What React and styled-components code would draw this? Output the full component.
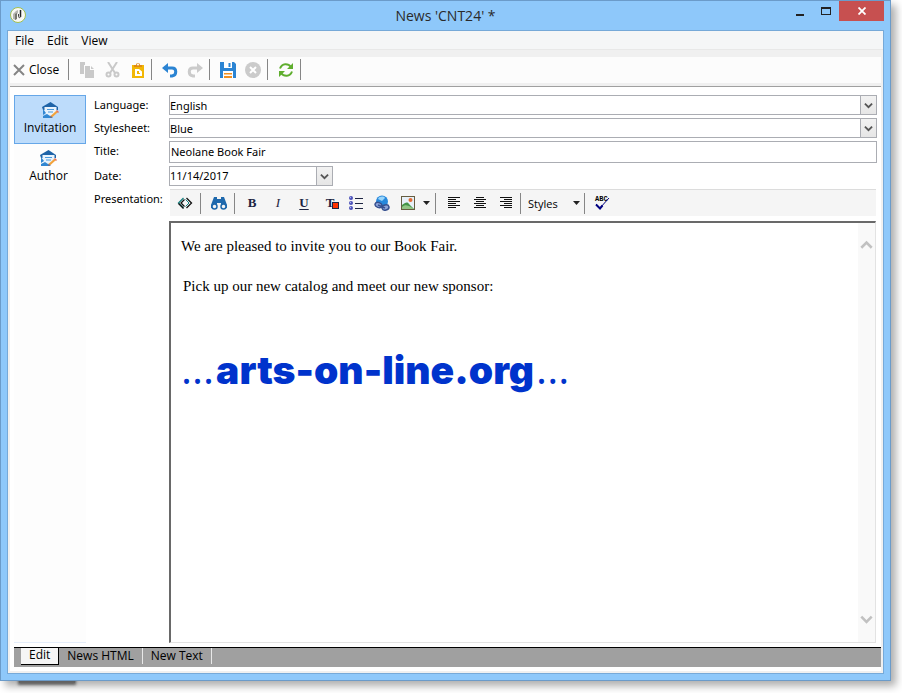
import React, { useState } from 'react';
import styled, { createGlobalStyle, css } from 'styled-components';

const GlobalStyle = createGlobalStyle`
  *, *::before, *::after { box-sizing: border-box; }
  body { margin: 0; background: #fff; overflow: hidden; }
  body, button, input, select {
    font-family: "Open Sans", "Noto Sans", sans-serif;
    font-size: 12px;
    color: #000;
  }
  button { padding: 0; border: 0; background: none; white-space: nowrap; }
  svg { display: block; flex: none; }
`;

const Desktop = styled.div`
  display: flex;
  min-height: 100vh;
  padding: 0 11px 12px 0;
`;

const Window = styled.div`
  position: relative;
  flex: 1;
  min-width: 0;
  display: flex;
  flex-direction: column;
  padding: 0 6px 6px;
  border: 1px solid #6b9bc9;
  background: #8ec8fa;
  box-shadow: 5px 5px 8px rgba(0, 0, 0, 0.32);

  &::after {
    content: '';
    position: absolute;
    z-index: -1;
    left: 18px;
    bottom: -3px;
    width: 56px;
    height: 6px;
    background: #888;
    box-shadow: 0 1px 3px 1px rgba(0, 0, 0, 0.5);
  }
`;

const TitleBar = styled.header`
  display: grid;
  grid-template-columns: 98px 1fr 98px;
  height: 29px;
`;

const AppMark = styled.div`
  padding: 5px 0 0 2px;
`;

const WindowTitle = styled.h1`
  margin: 0;
  font-size: 14px;
  font-weight: 400;
  line-height: 29px;
  color: #2a2a2a;
  text-align: center;
`;

const WindowButtons = styled.div`
  display: flex;
  justify-content: flex-end;
`;

const WindowButton = styled.button`
  flex: none;
  display: grid;
  place-items: center;
  width: ${(p) => (p.$close ? '45px' : '26px')};
  height: 20px;
  background: ${(p) => (p.$close ? '#c75050' : 'transparent')};
`;

const Client = styled.div`
  flex: 1;
  display: flex;
  flex-direction: column;
  padding-bottom: 2px;
  border: 1px solid #76a9d8;
  background: #f0f0f0;
`;

const MenuBar = styled.nav`
  display: flex;
  gap: 13px;
  height: 19px;
  padding-left: 7px;
  border-bottom: 1px solid #e8e8e8;
  background: #f5f6f7;
`;

const MenuItem = styled.button`
  line-height: 20px;
`;

const Toolbar = styled.div`
  display: flex;
  align-items: center;
  height: 26px;
  margin: 7px 2px 3px;
  padding: 0 0 1px 3px;
  background: #fcfcfc;
`;

const ToolButton = styled.button`
  display: flex;
  align-items: center;
  justify-content: center;
  gap: 4px;
  width: ${(p) => p.$width || 25}px;
  height: 22px;
`;

const Divider = styled.span`
  flex: none;
  width: 1px;
  height: 21px;
  margin: 0 ${(p) => p.$after || 4}px 0 ${(p) => p.$before || 4}px;
  background: #868686;
`;

const Body = styled.div`
  flex: 1;
  display: flex;
  flex-direction: column;
  margin: 0 2px;
  border-top: 1px solid #a0a0a0;
  background: #fff;
`;

const Workspace = styled.main`
  flex: 1;
  display: flex;
  gap: 8px;
  padding: 8px 4px 4px;
`;

const Sidebar = styled.nav`
  display: flex;
  flex-direction: column;
  width: 72px;
  border-bottom: 1px solid #e4edfa;
  background: #fdfdfd;
`;

const SideItem = styled.button`
  display: flex;
  flex-direction: column;
  align-items: center;
  height: ${(p) => (p.$active ? 49 : 48)}px;
  padding: ${(p) => (p.$active ? '6px 3px 0' : '5px 5px 0 2px')};
  border: 1px solid ${(p) => (p.$active ? '#66a7e8' : 'transparent')};
  background: ${(p) => (p.$active ? '#bddcfb' : 'transparent')};
  line-height: 18px;
`;

const Form = styled.form`
  flex: 1;
  min-width: 0;
  display: grid;
  grid-template-columns: 75px 1fr;
  grid-template-rows: 20px 20px 22px 20px 1fr;
  row-gap: 3px;
`;

const formText = css`
  font-family: "Noto Sans", "Open Sans", sans-serif;
  font-size: 11px;
`;

const Label = styled.label`
  ${formText}
  line-height: 19px;
`;

const fieldText = css`
  ${formText}
  width: 100%;
  min-width: 0;
  padding: 0;
  border: 0;
  outline: 0;
  background: transparent;
  appearance: none;
`;

const Field = styled.div`
  position: relative;
  display: flex;
  width: ${(p) => p.$width || '100%'};
  border: 1px solid #abadb3;
  background: #fff;
`;

const Select = styled.select`
  ${fieldText}
`;

const Input = styled.input`
  ${fieldText}
  padding-bottom: 2px;
  padding-left: ${(p) => p.$indent || 0}px;
`;

const dropArrow = css`
  flex: none;
  display: grid;
  place-items: center;
  width: 16px;
  border-left: 1px solid #abadb3;
  background: linear-gradient(#f2f2f2, #e6e6e6);
`;

const SelectArrow = styled.span`
  ${dropArrow}
  position: absolute;
  inset: 0 0 0 auto;
  pointer-events: none;
`;

const DateButton = styled.button`
  ${dropArrow}
  border-left: 1px solid #abadb3;
`;

const RichText = styled.div`
  display: flex;
  flex-direction: column;
  gap: 5px;
  margin-right: 1px;
`;

const FormatBar = styled.div`
  display: flex;
  align-items: center;
  height: 27px;
  margin-left: 1px;
  padding-left: 2px;
  border-top: 1px solid #dcdcdc;
  background: #f5f5f5;
`;

const FormatButton = styled(ToolButton)`
  width: ${(p) => p.$width || 26}px;
`;

const Letter = styled.span`
  position: relative;
  font-family: "Liberation Serif", serif;
  font-size: 13px;
  line-height: 14px;
  color: #1c2442;
  font-weight: ${(p) => (p.$plain ? 400 : 700)};
  font-style: ${(p) => (p.$italic ? 'italic' : 'normal')};
  text-decoration: ${(p) => (p.$underline ? 'underline' : 'none')};
  text-underline-offset: 2px;
`;

const Swatch = styled.i`
  position: absolute;
  left: 6px;
  top: 6px;
  width: 7px;
  height: 7px;
  border: 1px solid #1c2442;
  background: #f30;
`;

const StylesButton = styled.button`
  display: flex;
  align-items: center;
  justify-content: space-between;
  width: 52px;
  font-size: 11px;
`;

const Editor = styled.section`
  flex: 1;
  display: flex;
  border: solid;
  border-color: #696969 #e3e3e3 #e3e3e3 #696969;
  border-width: 2px 1px 1px 2px;
`;

const Article = styled.article`
  flex: 1;
  padding: 13px 10px;
  outline: 0;
  font-family: "Liberation Serif", serif;
  font-size: 15px;
`;

const Paragraph = styled.p`
  margin: 0 0 20px;
  padding-left: ${(p) => (p.$indent ? 2 : 0)}px;
  line-height: 20px;
`;

const Sponsor = styled.div`
  display: flex;
  align-items: baseline;
  margin-top: 44px;
  line-height: 56px;
  color: #0033cc;
`;

const Dots = styled.span`
  font-family: "Open Sans", sans-serif;
  font-size: 42px;
`;

const Brand = styled.strong`
  margin: 0 2px;
  font-family: Inter, sans-serif;
  font-size: 39px;
  font-weight: 900;
`;

const ScrollBar = styled.div`
  display: flex;
  flex-direction: column;
  justify-content: space-between;
  align-items: center;
  width: 17px;
  padding: 15px 0 16px;
  background: #f9f9f9;
`;

const Tabs = styled.div`
  display: flex;
  height: 20px;
  margin: 0 0 4px 4px;
  padding-left: 7px;
  border-top: 1px solid #000;
  background: #a0a0a0;
`;

const Tab = styled.button`
  height: ${(p) => (p.$active ? 17 : 16)}px;
  padding: 0 8px;
  line-height: 16px;
  border-right: 1px solid #e8e8e8;
  ${(p) =>
    p.$active &&
    css`
      padding: 0 8px 2px;
      border-right-color: #000;
      border-bottom: 1px solid #000;
      background: #f5f5f5;
      line-height: 14px;
    `}
`;

const LogoIcon = () => (
  <svg width="18" height="18" viewBox="0 0 18 18">
    <circle cx="9" cy="9" r="7.5" fill="#f8f8f4" stroke="#a3c04f" strokeWidth="1" />
    <path d="M4 8 7 5l2-1v3L7 9v5l-3-1z" fill="#b5b5b0" />
    <path d="M6 8l2-1v6l-2 1z" fill="#77776f" />
    <path d="M11.500 4v7" stroke="#222" strokeWidth="1.500" />
    <path d="M9.500 8v2.500c0 1.500 2 1.500 2 0" fill="none" stroke="#444" />
  </svg>
);

const Chevron = ({ up, size = 9, color = '#555', thick = 2 }) => (
  <svg width={size} height={size} viewBox="0 0 10 10" fill="none" stroke={color} strokeWidth={thick}>
    <path d={up ? 'M1 7.5 5 3.5 9 7.5' : 'M1 2.8 5 6.8 9 2.8'} />
  </svg>
);

const CaretIcon = () => (
  <svg width="7" height="4" viewBox="0 0 7 4"><path d="M0 0h7L3.500 4z" fill="#222" /></svg>
);

const CloseIcon = () => (
  <svg width="12" height="12" viewBox="0 0 12 12" stroke="#858585" strokeWidth="2">
    <path d="M1 1l10 10M11 1 1 11" />
  </svg>
);

const CopyIcon = () => (
  <svg width="16" height="16" viewBox="0 0 16 16" fill="#c9c9c9">
    <path d="M0 0h5v3H4v9H0zM5 4h5v4h4v8H5zM11 4l3 3h-3z" />
  </svg>
);

const CutIcon = () => (
  <svg width="16" height="16" viewBox="0 0 16 16" fill="none" stroke="#c9c9c9" strokeWidth="2">
    <path d="M3 0 10 11M12 0 5 11" />
    <circle cx="3.500" cy="12.500" r="2" />
    <circle cx="11.500" cy="12.500" r="2" />
  </svg>
);

const PasteIcon = () => (
  <svg width="12" height="16" viewBox="0 0 12 16">
    <path d="M0 3h12v13H0z" fill="#f2b705" />
    <path d="M2 3h2a2 2 0 0 1 4 0h2v2H2z" fill="#e08a14" />
    <circle cx="6" cy="2.500" r="1" fill="#fff" />
    <path d="M3 7h4l3 2.500V14H3z" fill="#fff" />
    <path d="M5 9h2v2h1v1H5z" fill="#f2b705" />
  </svg>
);

const TurnIcon = ({ redo }) => (
  <svg width="16" height="16" viewBox="0 0 16 16">
    <g transform={redo ? 'matrix(-1 0 0 1 16 0)' : undefined}>
      <path d="M0 6 6 1v10z" fill={redo ? '#cbcbcb' : '#2b84d3'} />
      <path d="M5 6h5c5 0 5 7 0 8H8" fill="none" stroke={redo ? '#cbcbcb' : '#2b84d3'} strokeWidth="3" />
    </g>
  </svg>
);

const SaveIcon = () => (
  <svg width="16" height="16" viewBox="0 0 16 16">
    <path d="M0 0h14l2 2v14H0z" fill="#2b84d3" />
    <path d="M4 0h8v6H4zM3 9h10v7H3z" fill="#fff" />
    <path d="M8.500 1h2v4h-2z" fill="#2b84d3" />
    <path d="M4 11h8v1.500H4zM4 14h8v2H4z" fill="#f19021" />
  </svg>
);

const CancelIcon = () => (
  <svg width="16" height="16" viewBox="0 0 16 16">
    <circle cx="8" cy="8" r="8" fill="#cbcbcb" />
    <path d="M5 5l6 6M11 5l-6 6" stroke="#fff" strokeWidth="2" />
  </svg>
);

const RefreshIcon = () => (
  <svg width="16" height="16" viewBox="0 0 16 16" fill="none" stroke="#5fae2e" strokeWidth="2">
    <path d="M2 6.500C4 1 10 1 13 5M14 9.500C12 15 6 15 3 11" />
    <path d="M15 1v6H9zM1 15V9h6z" fill="#5fae2e" stroke="none" />
  </svg>
);

const MailIcon = () => (
  <svg width="17" height="17" viewBox="0 0 17 17">
    <path d="M0 5 8.500 0 16 5v3H1z" fill="#1f64a8" />
    <path d="M2.500 5h12v6l-6 3-6-3z" fill="#e9f3fc" />
    <path d="M5 7.500h7M6 10h5" stroke="#4b9add" />
    <path d="M1 7l3 4-3 2zM1 16v-2l4-2 6 4z" fill="#3187d2" />
    <path d="M9.500 14.500 15 9.500" stroke="#f3a23a" strokeWidth="2.200" />
    <path d="M15 8l2 2-1 1-2-2z" fill="#e5705a" />
    <path d="M8 16l.7-2.500 1.800 1.700z" fill="#866" />
  </svg>
);

const SourceIcon = () => (
  <svg width="16" height="12" viewBox="0 0 16 12" fill="none">
    <path d="M6.500 1 1.500 6l5 5" stroke="#168080" strokeWidth="1.300" />
    <path d="M7.500 2.500 4 6l3.500 3.500M1.500 6.500l5 5" stroke="#111" strokeWidth="1.300" />
    <path d="M9.500 1l5 5-5 5" stroke="#111" strokeWidth="1.300" />
    <path d="M8.500 2.500 12 6 8.500 9.500" stroke="#168080" />
  </svg>
);

const FindIcon = () => (
  <svg width="16" height="14" viewBox="0 0 16 14">
    <path d="M3 1h3v2h4V1h3l3 8v3h-6V7H6v5H0V9z" fill="#1f69ad" />
    <circle cx="3.500" cy="10.500" r="2.500" fill="#f5f5f5" stroke="#1f69ad" strokeWidth="1.500" />
    <circle cx="12.500" cy="10.500" r="2.500" fill="#f5f5f5" stroke="#1f69ad" strokeWidth="1.500" />
  </svg>
);

const ListIcon = () => (
  <svg width="14" height="14" viewBox="0 0 14 14">
    {[2, 7, 12].map((y) => (
      <g key={y}>
        <circle cx="2" cy={y} r="2" fill="#4a50b8" />
        <circle cx="1.500" cy={y - 0.5} r=".7" fill="#a9b0f0" />
        <path d={`M6 ${y + 0.5}h8`} stroke="#1c2442" />
      </g>
    ))}
  </svg>
);

const LinkIcon = () => (
  <svg width="16" height="16" viewBox="0 0 16 16">
    <circle cx="8" cy="6.500" r="6" fill="#2788dc" />
    <path d="M4 4c1-3 6-3 7-1L8 6z" fill="#9ad5fa" />
    <g fill="#8ea4d8" stroke="#36508f" strokeWidth="1.500">
      <ellipse cx="4.500" cy="10" rx="3.500" ry="2.500" transform="rotate(20 4.500 10)" />
      <ellipse cx="11.500" cy="12.500" rx="3.500" ry="2.500" transform="rotate(-15 11.500 12.500)" />
      <path d="M4 10l7 3" />
    </g>
  </svg>
);

const ImageIcon = () => (
  <svg width="14" height="14" viewBox="0 0 14 14">
    <rect x=".5" y=".5" width="13" height="13" fill="#e7f0f8" stroke="#665d40" />
    <path d="M1 9c3-2 5-4 7-1l5 5H1z" fill="#439447" />
    <path d="M1 11c4-4 9 0 12 2H1z" fill="#91c584" />
    <circle cx="9.500" cy="4" r="2" fill="#e36c35" />
  </svg>
);

const alignLines = {
  left: [[0, 12], [0, 8], [0, 12], [0, 8], [0, 12], [0, 8]],
  center: [[2, 10], [0, 12], [2, 10], [0, 12], [2, 10], [0, 12]],
  right: [[0, 12], [4, 12], [0, 12], [4, 12], [0, 12], [4, 12]],
};

const AlignIcon = ({ kind }) => (
  <svg width="12" height="12" viewBox="0 0 12 12" stroke="#111">
    {alignLines[kind].map(([a, b], i) => (
      <path key={i} d={`M${a} ${i * 2 + 0.5}H${b}`} />
    ))}
  </svg>
);

const SpellText = styled.text`
  font: 700 7px "Liberation Mono", monospace;
`;

const SpellIcon = () => (
  <svg width="16" height="16" viewBox="0 0 16 16">
    <SpellText x="1" y="6">ABC</SpellText>
    <path d="M2 9l4 4 9-10" fill="none" stroke="#000080" strokeWidth="1" />
    <path d="M2 9.500 6 13.500l2.500-3" fill="none" stroke="#000080" strokeWidth="2" />
  </svg>
);

export default function App() {
  const [section, setSection] = useState('Invitation');
  const [tab, setTab] = useState('Edit');
  return (
    <>
      <GlobalStyle />
      <Desktop>
        <Window>
          <TitleBar>
            <AppMark><LogoIcon /></AppMark>
            <WindowTitle>News 'CNT24' *</WindowTitle>
            <WindowButtons>
              <WindowButton aria-label="Minimize">
                <svg width="8" height="14" viewBox="0 0 8 14"><path d="M0 10h8v2H0z" fill="#222" /></svg>
              </WindowButton>
              <WindowButton aria-label="Maximize">
                <svg width="10" height="8" viewBox="0 0 10 8"><path d="M0 0h10v8H0zM1 2v5h8V2z" fill="#222" fillRule="evenodd" /></svg>
              </WindowButton>
              <WindowButton $close aria-label="Close window">
                <svg width="8" height="8" viewBox="0 0 8 8" stroke="#fff" strokeWidth="1.800"><path d="M.5.5l7 7M7.500.5l-7 7" /></svg>
              </WindowButton>
            </WindowButtons>
          </TitleBar>
          <Client>
            <MenuBar>
              <MenuItem>File</MenuItem>
              <MenuItem>Edit</MenuItem>
              <MenuItem>View</MenuItem>
            </MenuBar>
            <Toolbar>
              <ToolButton $width={46}><CloseIcon />Close</ToolButton>
              <Divider $before={9} $after={6} />
              <ToolButton aria-label="Copy"><CopyIcon /></ToolButton>
              <ToolButton aria-label="Cut"><CutIcon /></ToolButton>
              <ToolButton aria-label="Paste"><PasteIcon /></ToolButton>
              <Divider $before={1} $after={5} />
              <ToolButton aria-label="Undo"><TurnIcon /></ToolButton>
              <ToolButton aria-label="Redo" disabled><TurnIcon redo /></ToolButton>
              <Divider $before={2} $after={5} />
              <ToolButton aria-label="Save"><SaveIcon /></ToolButton>
              <ToolButton aria-label="Cancel" disabled><CancelIcon /></ToolButton>
              <Divider $before={2} $after={5} />
              <ToolButton aria-label="Refresh"><RefreshIcon /></ToolButton>
              <Divider $before={2} />
            </Toolbar>
            <Body>
              <Workspace>
                <Sidebar>
                  {['Invitation', 'Author'].map((name) => (
                    <SideItem key={name} $active={section === name} onClick={() => setSection(name)}>
                      <MailIcon />
                      {name}
                    </SideItem>
                  ))}
                </Sidebar>
                <Form onSubmit={(e) => e.preventDefault()}>
                  <Label htmlFor="language">Language:</Label>
                  <Field>
                    <Select id="language"><option>English</option></Select>
                    <SelectArrow><Chevron /></SelectArrow>
                  </Field>
                  <Label htmlFor="stylesheet">Stylesheet:</Label>
                  <Field>
                    <Select id="stylesheet"><option>Blue</option></Select>
                    <SelectArrow><Chevron /></SelectArrow>
                  </Field>
                  <Label htmlFor="title">Title:</Label>
                  <Field><Input id="title" $indent={1} defaultValue="Neolane Book Fair" /></Field>
                  <Label htmlFor="date">Date:</Label>
                  <Field $width="164px">
                    <Input id="date" defaultValue="11/14/2017" />
                    <DateButton type="button" aria-label="Choose date"><Chevron /></DateButton>
                  </Field>
                  <Label as="span" id="presentation">Presentation:</Label>
                  <RichText>
                    <FormatBar>
                      <FormatButton type="button" aria-label="Source"><SourceIcon /></FormatButton>
                      <Divider $before={2} $after={5} />
                      <FormatButton type="button" aria-label="Find"><FindIcon /></FormatButton>
                      <Divider $before={2} />
                      <FormatButton type="button"><Letter>B</Letter></FormatButton>
                      <FormatButton type="button"><Letter $plain $italic>I</Letter></FormatButton>
                      <FormatButton type="button"><Letter $underline>U</Letter></FormatButton>
                      <FormatButton type="button"><Letter>T<Swatch /></Letter></FormatButton>
                      <FormatButton type="button" aria-label="Bulleted list"><ListIcon /></FormatButton>
                      <FormatButton type="button" aria-label="Insert link"><LinkIcon /></FormatButton>
                      <FormatButton type="button" aria-label="Insert image"><ImageIcon /></FormatButton>
                      <FormatButton type="button" $width={10} aria-label="Image options"><CaretIcon /></FormatButton>
                      <Divider $after={5} />
                      <FormatButton type="button" aria-label="Align left"><AlignIcon kind="left" /></FormatButton>
                      <FormatButton type="button" aria-label="Align center"><AlignIcon kind="center" /></FormatButton>
                      <FormatButton type="button" aria-label="Align right"><AlignIcon kind="right" /></FormatButton>
                      <Divider $before={1} $after={7} />
                      <StylesButton type="button">Styles<CaretIcon /></StylesButton>
                      <Divider />
                      <FormatButton type="button" aria-label="Check spelling"><SpellIcon /></FormatButton>
                    </FormatBar>
                    <Editor aria-labelledby="presentation">
                      <Article contentEditable suppressContentEditableWarning>
                        <Paragraph>We are pleased to invite you to our Book Fair.</Paragraph>
                        <Paragraph $indent>Pick up our new catalog and meet our new sponsor:</Paragraph>
                        <Sponsor>
                          <Dots>...</Dots>
                          <Brand>arts-on-line.org</Brand>
                          <Dots>...</Dots>
                        </Sponsor>
                      </Article>
                      <ScrollBar>
                        <button type="button" aria-label="Scroll up"><Chevron up size={13} color="#c1c1c1" /></button>
                        <button type="button" aria-label="Scroll down"><Chevron size={13} color="#c1c1c1" /></button>
                      </ScrollBar>
                    </Editor>
                  </RichText>
                </Form>
              </Workspace>
              <Tabs>
                {['Edit', 'News HTML', 'New Text'].map((name) => (
                  <Tab key={name} $active={tab === name} onClick={() => setTab(name)}>{name}</Tab>
                ))}
              </Tabs>
            </Body>
          </Client>
        </Window>
      </Desktop>
    </>
  );
}
